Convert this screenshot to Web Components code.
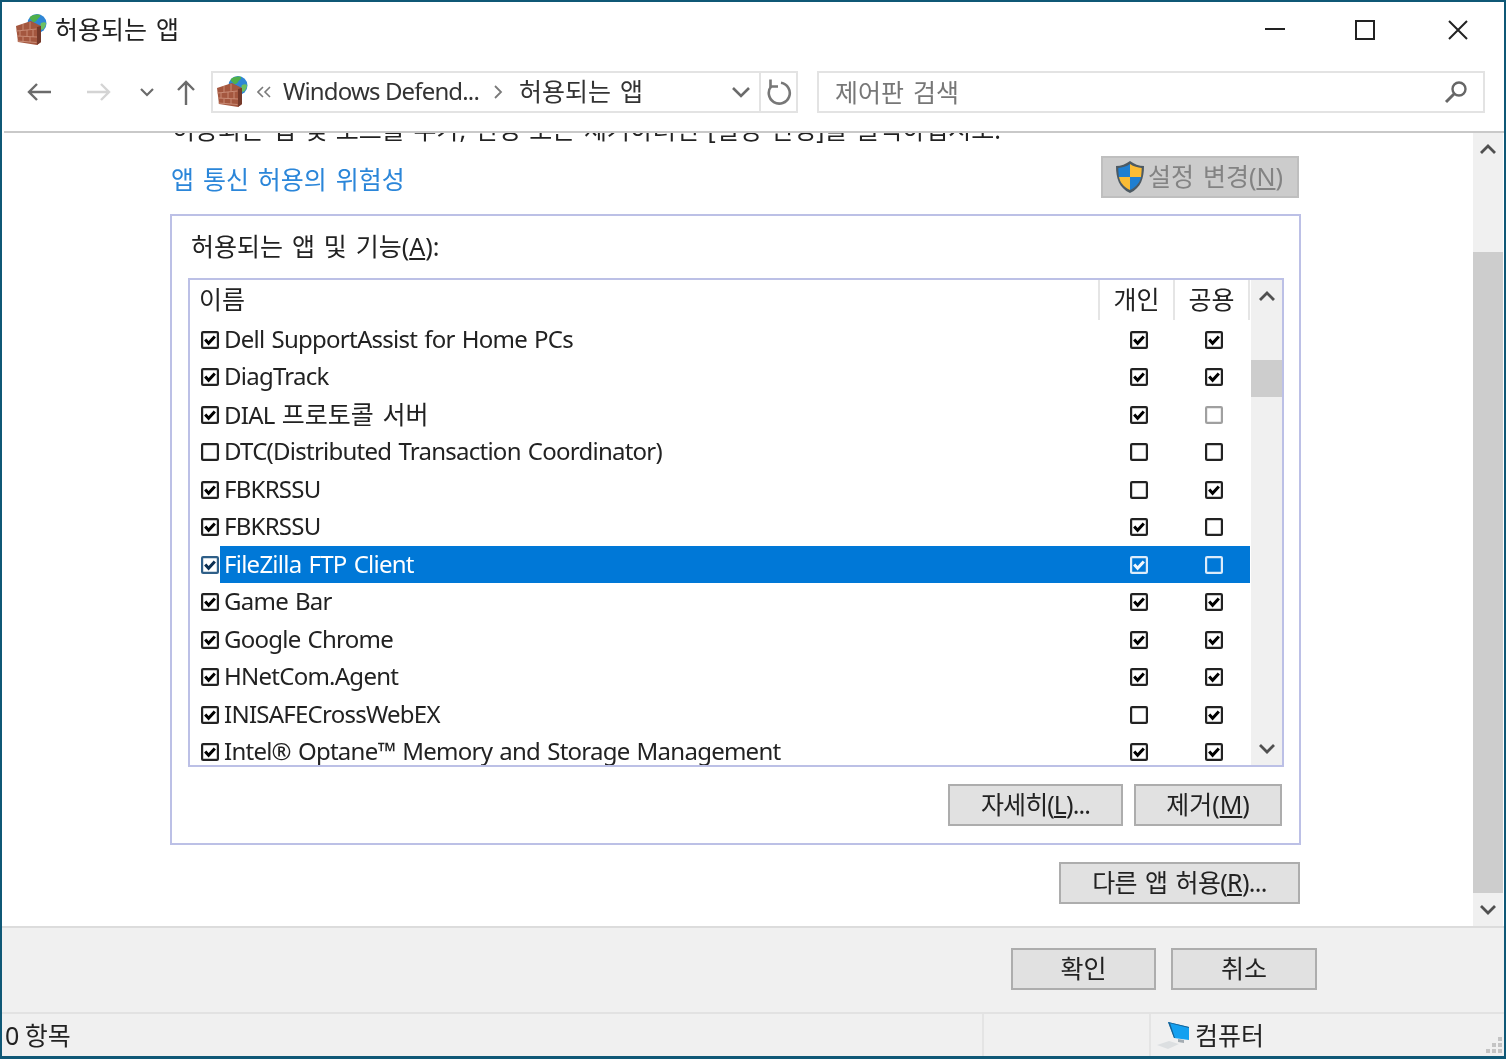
<!DOCTYPE html>
<html lang="ko">
<head>
<meta charset="utf-8">
<title>허용되는 앱</title>
<style>
    html, body { margin: 0; height: 100%; overflow: hidden; background: #fff; }
    body { font-family: "Noto Sans", "Noto Sans CJK KR", sans-serif; font-size: 25px; word-spacing: 2.4px; color: #222; }
</style>
</head>
<body>
<firewall-window></firewall-window>

<script>
const FIREWALL_SVG = `
    <svg width="32" height="32" viewBox="0 0 32 32" style="display:block">
        <circle cx="22" cy="9.500" r="9.500" fill="#2f86d6"/>
        <path d="M15 3c3-2.500 8-3 10-2 1 2-2 3-3 5s-4 3-5 1-3-2-2-4z" fill="#4fb04a"/>
        <path d="M26 9c2-1 4-1 5 0 0 3-2 6-4 7-2-1-2-5-1-7z" fill="#6cc060"/>
        <path d="M1 12l15-5 10 5v16l-4 3-19-3z" fill="#a4573f"/>
        <path d="M22 13l4-1v16l-4 3z" fill="#75392a"/>
        <path d="M1.500 17l20-2M2 22l20 1M2.500 27l19 1.500M8 10v6M15 8v7M5 17v5M12 16v7M18 16v7M8 23v4M15 23v5" stroke="#c98b75" stroke-width="1" fill="none"/>
    </svg>`;

class WinCheck extends HTMLElement {
    constructor() {
        super();
        this.attachShadow({ mode: 'open' });
    }
    connectedCallback() {
        const on = this.hasAttribute('on');
        const tone = this.getAttribute('tone') || 'normal';
        const colors = {
            normal: ['#222', '#000', '#fff'],
            off: ['#a0a0a0', '#a0a0a0', '#fff'],
            focus: ['#2f5f88', '#0c2f52', '#fff'],
            invert: ['#dcecfa', '#f2f8fd', 'transparent']
        }[tone];
        this.shadowRoot.innerHTML = `
            <style>
                :host { display: inline-block; width: 18px; height: 18px; line-height: 0; }
            </style>
            <svg width="18" height="18" viewBox="0 0 18 18">
                <rect x="1.100" y="1.100" width="15.800" height="15.800" rx="1" fill="${colors[2]}" stroke="${colors[0]}" stroke-width="2.200"/>
                ${on ? `<path d="M4.200 8.400l3.400 3.800 6.200-6.800" fill="none" stroke="${colors[1]}" stroke-width="3"/>` : ''}
            </svg>`;
    }
}
customElements.define('win-check', WinCheck);

class WinButton extends HTMLElement {
    constructor() {
        super();
        this.attachShadow({ mode: 'open' });
        this.shadowRoot.innerHTML = `
            <style>
                :host {
                    display: inline-flex;
                    align-items: center;
                    justify-content: center;
                    box-sizing: border-box;
                    height: 42px;
                    padding-bottom: 4px;
                    background: #e1e1e1;
                    border: 2px solid #adadad;
                    color: #222;
                    font-size: 25px;
                    white-space: nowrap;
                }
                :host([disabled]) {
                    background: #cccccc;
                    border-color: #bfbfbf;
                    color: #838383;
                }
            </style>
            <slot></slot>`;
    }
}
customElements.define('win-button', WinButton);

class WinScrollbar extends HTMLElement {
    constructor() {
        super();
        this.attachShadow({ mode: 'open' });
    }
    connectedCallback() {
        const offset = this.getAttribute('offset');
        const size = this.getAttribute('size');
        this.shadowRoot.innerHTML = `
            <style>
                :host {
                    display: flex;
                    flex-direction: column;
                    background: #f0f0f0;
                    flex: none;
                    height: 100%;
                    box-sizing: border-box;
                }
                .arrow {
                    height: 32px;
                    flex: none;
                    display: flex;
                    align-items: center;
                    justify-content: center;
                }
                .thumb {
                    background: #cdcdcd;
                    margin-top: ${offset}px;
                    height: ${size}px;
                    flex: none;
                }
                .down { margin-top: auto; }
            </style>
            <div class="arrow"><svg width="18" height="12" viewBox="0 0 18 12"><path d="M2 10l7-7 7 7" fill="none" stroke="#505050" stroke-width="2.800"/></svg></div>
            <div class="thumb"></div>
            <div class="arrow down"><svg width="18" height="12" viewBox="0 0 18 12"><path d="M2 2l7 7 7-7" fill="none" stroke="#505050" stroke-width="2.800"/></svg></div>`;
    }
}
customElements.define('win-scrollbar', WinScrollbar);

class WinTitlebar extends HTMLElement {
    constructor() {
        super();
        this.attachShadow({ mode: 'open' });
        this.shadowRoot.innerHTML = `
            <style>
                :host {
                    display: flex;
                    align-items: center;
                    height: 56px;
                    flex: none;
                    padding-left: 13px;
                    background: #fff;
                }
                .title { margin: -4px 0 0 8px; font-size: 25px; color: #222; }
                .controls { margin-left: auto; display: flex; }
                .controls div {
                    width: 91.500px;
                    height: 56px;
                    display: flex;
                    align-items: center;
                    justify-content: center;
                }
                svg { display: block; }
            </style>
            ${FIREWALL_SVG}
            <span class="title">허용되는 앱</span>
            <div class="controls">
                <div><svg width="20" height="20" viewBox="0 0 20 20"><path d="M0 9h20" stroke="#222" stroke-width="2"/></svg></div>
                <div><svg width="20" height="20" viewBox="0 0 20 20" style="margin-right:3px"><rect x="1" y="1" width="18" height="18" fill="none" stroke="#222" stroke-width="2"/></svg></div>
                <div><svg width="20" height="20" viewBox="0 0 20 20"><path d="M1 1l18 18M19 1L1 19" stroke="#222" stroke-width="2"/></svg></div>
            </div>`;
    }
}
customElements.define('win-titlebar', WinTitlebar);

class WinNavbar extends HTMLElement {
    constructor() {
        super();
        this.attachShadow({ mode: 'open' });
        this.shadowRoot.innerHTML = `
            <style>
                :host {
                    display: flex;
                    align-items: flex-start;
                    flex: none;
                    height: 75px;
                    box-sizing: border-box;
                    padding-top: 13px;
                    margin-left: 2px;
                    border-bottom: 2px solid #c9c9c9;
                    background: #fff;
                }
                svg { display: block; flex: none; }
                .arrows { display: flex; align-items: center; height: 42px; padding-left: 23px; width: 207px; box-sizing: border-box; }
                .field {
                    display: flex;
                    align-items: center;
                    box-sizing: border-box;
                    height: 42px;
                    border: 2px solid #e3e3e3;
                    background: #fff;
                }
                .address { width: 587px; }
                .search { width: 668px; margin-left: 19px; padding: 0 15px 0 16px; justify-content: space-between; color: #777; }
                .search span { margin-top: -3px; }
                .crumb { font-size: 25px; color: #333; white-space: nowrap; margin-top: -4px; }
                .latin { font-size: 24px; letter-spacing: -0.850px; word-spacing: 0; }
                .refresh { border-left: 2px solid #e3e3e3; height: 100%; width: 35px; display: flex; align-items: center; justify-content: center; flex: none; }
            </style>
            <div class="arrows">
                <svg width="24" height="20" viewBox="0 0 24 20"><path d="M24 10H2M10 2l-8 8 8 8" fill="none" stroke="#6b6b6b" stroke-width="2.400"/></svg>
                <svg width="24" height="20" viewBox="0 0 24 20" style="margin-left:36px"><path d="M0 10h22M14 2l8 8-8 8" fill="none" stroke="#d4d4d4" stroke-width="2.400"/></svg>
                <svg width="14" height="9" viewBox="0 0 14 9" style="margin-left:29px"><path d="M1 1l6 6 6-6" fill="none" stroke="#6b6b6b" stroke-width="2.200"/></svg>
                <svg width="20" height="26" viewBox="0 0 20 26" style="margin-left:22px"><path d="M10 26V3M2 11l8-8 8 8" fill="none" stroke="#6b6b6b" stroke-width="2.400"/></svg>
            </div>
            <div class="field address">
                <span style="margin-left:3px">${FIREWALL_SVG}</span>
                <svg width="14" height="12" viewBox="0 0 14 12" style="margin-left:9px"><path d="M6 1L1 6l5 5M13 1L8 6l5 5" fill="none" stroke="#7a7a7a" stroke-width="1.600"/></svg>
                <span class="crumb latin" style="margin-left:12px">Windows Defend...</span>
                <svg width="10" height="16" viewBox="0 0 10 16" style="margin-left:14px"><path d="M2 2l6 6-6 6" fill="none" stroke="#7a7a7a" stroke-width="1.800"/></svg>
                <span class="crumb" style="margin-left:16px">허용되는 앱</span>
                <svg width="18" height="11" viewBox="0 0 18 11" style="margin-left:auto;margin-right:9px"><path d="M1 1l8 8 8-8" fill="none" stroke="#6b6b6b" stroke-width="2.600"/></svg>
                <div class="refresh">
                    <svg width="26" height="28" viewBox="0 0 26 28" style="margin-left:1px"><path d="M5.500 8A10.500 10.500 0 1 0 15 4.700" fill="none" stroke="#777" stroke-width="2.600"/><path d="M4.500 1.500V8.500H12" fill="none" stroke="#777" stroke-width="2.600"/></svg>
                </div>
            </div>
            <div class="field search">
                <span>제어판 검색</span>
                <svg width="24" height="24" viewBox="0 0 24 24"><circle cx="15" cy="9" r="6.500" fill="none" stroke="#666" stroke-width="2.400"/><path d="M10 14l-8 8" stroke="#666" stroke-width="3"/></svg>
            </div>`;
    }
}
customElements.define('win-navbar', WinNavbar);

class AppRow extends HTMLElement {
    constructor() {
        super();
        this.attachShadow({ mode: 'open' });
    }
    connectedCallback() {
        const selected = this.hasAttribute('selected');
        const tone = selected ? 'invert' : 'normal';
        const box = (val) => {
            if (val === '2') return `<win-check tone="off"></win-check>`;
            return `<win-check tone="${tone}" ${val === '1' ? 'on' : ''}></win-check>`;
        };
        const flags = this.getAttribute('flags');
        this.shadowRoot.innerHTML = `
            <style>
                :host { display: flex; align-items: stretch; height: 37.500px; flex: none; font-size: 24px; letter-spacing: -0.750px; word-spacing: 1.600px; }
                .lead { width: 30px; flex: none; padding-left: 11px; box-sizing: border-box; display: flex; align-items: center; }
                .body {
                    flex: 1;
                    display: grid;
                    grid-template-columns: 1fr 75px 75px;
                    margin-right: 1px;
                    align-items: center;
                    color: #222;
                }
                :host([selected]) .body { background: #0078d7; color: #fff; }
                .name { padding-left: 4px; white-space: nowrap; margin-top: -3px; }
                .cell { padding-left: 3px; display: flex; justify-content: center; }
            </style>
            <div class="lead">
                <win-check tone="${selected ? 'focus' : 'normal'}" ${flags[0] === '1' ? 'on' : ''}></win-check>
            </div>
            <div class="body">
                <span class="name"><slot></slot></span>
                <span class="cell">${box(flags[1])}</span>
                <span class="cell">${box(flags[2])}</span>
            </div>`;
    }
}
customElements.define('app-row', AppRow);

class AppList extends HTMLElement {
    constructor() {
        super();
        this.attachShadow({ mode: 'open' });
        this.shadowRoot.innerHTML = `
            <style>
                :host {
                    display: flex;
                    box-sizing: border-box;
                    height: 489px;
                    border: 2px solid #bcc0e6;
                    background: #fff;
                    overflow: hidden;
                }
                .rows { flex: 1; display: flex; flex-direction: column; min-width: 0; overflow: hidden; }
                .head {
                    display: grid;
                    grid-template-columns: 910px 75px 75px;
                    height: 40.750px;
                    flex: none;
                    font-size: 25px;
                    color: #222;
                }
                .head div {
                    display: flex;
                    align-items: center;
                    height: 40px;
                    box-sizing: border-box;
                    border-right: 2px solid #e5e5e5;
                    justify-content: center;
                    padding-bottom: 4px;
                }
                .head div:first-child { justify-content: flex-start; padding-left: 9px; }
                win-scrollbar { width: 31px; }
            </style>
            <div class="rows">
                <div class="head"><div>이름</div><div>개인</div><div>공용</div></div>
                <slot></slot>
            </div>
            <win-scrollbar offset="48" size="37"></win-scrollbar>`;
    }
}
customElements.define('app-list', AppList);

class AppGroup extends HTMLElement {
    constructor() {
        super();
        this.attachShadow({ mode: 'open' });
        this.shadowRoot.innerHTML = `
            <style>
                :host {
                    display: block;
                    box-sizing: border-box;
                    width: 1131px;
                    height: 631px;
                    border: 2px solid #bcc0e6;
                    padding: 0 15px 0 16px;
                }
                .label { height: 62px; display: flex; align-items: center; padding: 0 0 4px 3px; box-sizing: border-box; font-size: 25px; color: #222; }
                .actions { display: flex; justify-content: flex-end; gap: 11px; margin: 17px 2px 0 0; }
            </style>
            <div class="label"><span>허용되는 앱 및 기능(<u>A</u>):</span></div>
            <slot name="list"></slot>
            <div class="actions"><slot name="actions"></slot></div>`;
    }
}
customElements.define('app-group', AppGroup);

class WinFooter extends HTMLElement {
    constructor() {
        super();
        this.attachShadow({ mode: 'open' });
        this.shadowRoot.innerHTML = `
            <style>
                :host {
                    display: flex;
                    justify-content: flex-end;
                    gap: 15px;
                    flex: none;
                    box-sizing: border-box;
                    height: 86px;
                    padding: 20px 187px 0 0;
                    background: #f0f0f0;
                    border-top: 2px solid #dcdcdc;
                }
            </style>
            <slot></slot>`;
    }
}
customElements.define('win-footer', WinFooter);

class WinStatus extends HTMLElement {
    constructor() {
        super();
        this.attachShadow({ mode: 'open' });
        this.shadowRoot.innerHTML = `
            <style>
                :host {
                    display: flex;
                    align-items: center;
                    flex: none;
                    box-sizing: border-box;
                    height: 44px;
                    background: #f0f0f0;
                    border-top: 2px solid #e2e2e2;
                    font-size: 25px;
                    color: #222;
                }
                .left { width: 982px; padding: 0 0 3px 3px; box-sizing: border-box; height: 100%; display: flex; align-items: center; border-right: 2px solid #e4e4e4; word-spacing: -1px; }
                .mid { width: 167px; box-sizing: border-box; height: 100%; border-right: 2px solid #e4e4e4; }
                .zone { display: flex; align-items: center; margin-left: 6px; gap: 4px; }
                .zone span { margin-top: -3px; }
                .grip { margin-left: auto; align-self: flex-end; margin-right: 1px; margin-bottom: 1px; display: block; }
            </style>
            <div class="left">0 항목</div>
            <div class="mid"></div>
            <div class="zone">
                <svg width="34" height="28" viewBox="0 0 34 28">
                    <path d="M11 1l21 5v13l-15-2z" fill="#14a0f0"/>
                    <path d="M11 1l2 1 5 15-1 0z" fill="#1b5f8f"/>
                    <path d="M11 1l21 5v1L12 2z" fill="#1b5f8f"/>
                    <path d="M21 18l6 1v3l-6-1z" fill="#a4acb2"/>
                    <path d="M0 24l12-4 10 3-11 5z" fill="#dcdfe1"/>
                </svg>
                <span>컴퓨터</span>
            </div>
            <svg class="grip" width="18" height="18" viewBox="0 0 18 18" fill="#c4c4c4">
                <rect x="13" y="0" width="4" height="4"/>
                <rect x="7" y="6" width="4" height="4"/><rect x="13" y="6" width="4" height="4"/>
                <rect x="1" y="12" width="4" height="4"/><rect x="7" y="12" width="4" height="4"/><rect x="13" y="12" width="4" height="4"/>
            </svg>`;
    }
}
customElements.define('win-status', WinStatus);

class FirewallWindow extends HTMLElement {
    constructor() {
        super();
        this.attachShadow({ mode: 'open' });
        const hangul = 'font-size:25px;letter-spacing:0;word-spacing:2.400px';
        const apps = [
            ['Dell SupportAssist for Home PCs', '111'],
            ['DiagTrack', '111'],
            [`DIAL <span style="${hangul}">프로토콜 서버</span>`, '112'],
            ['DTC(Distributed Transaction Coordinator)', '000'],
            ['FBKRSSU', '101'],
            ['FBKRSSU', '110'],
            ['FileZilla FTP Client', '110', true],
            ['Game Bar', '111'],
            ['Google Chrome', '111'],
            ['HNetCom.Agent', '111'],
            ['INISAFECrossWebEX', '101'],
            ['Intel® Optane™ Memory and Storage Management', '111']
        ];
        const rows = apps.map(app => `<app-row flags="${app[1]}" ${app[2] ? 'selected' : ''}>${app[0]}</app-row>`).join('');
        this.shadowRoot.innerHTML = `
            <style>
                :host {
                    display: flex;
                    flex-direction: column;
                    box-sizing: border-box;
                    width: 1506px;
                    height: 1059px;
                    border: 2px solid #0f5876;
                    border-bottom-width: 3px;
                    background: #fff;
                    overflow: hidden;
                    filter: blur(0.400px);
                }
                .content { flex: 1; display: flex; min-height: 0; }
                .main { flex: 1; min-width: 0; padding-left: 168px; overflow: hidden; }
                .clipped {
                    margin: -21px 0 10px 2px;
                    height: 34px;
                    line-height: 34px;
                    white-space: nowrap;
                    color: #222;
                    font-size: 25px;
                    word-spacing: 2.100px;
                }
                .top {
                    display: flex;
                    justify-content: space-between;
                    width: 1129px;
                    height: 42px;
                    margin-bottom: 16px;
                }
                .link { color: #2b86d9; font-size: 25px; padding-top: 1px; display: flex; align-items: center; margin-left: 1px; }
                .more { display: flex; justify-content: flex-end; width: 1130px; margin-top: 17px; }
                win-scrollbar { width: 30px; margin-right: 1px; }
                u { text-underline-offset: 2px; }
            </style>
            <win-titlebar></win-titlebar>
            <win-navbar></win-navbar>
            <div class="content">
                <div class="main">
                    <div class="clipped">허용되는 앱 및 포트를 추가, 변경 또는 제거하려면 [설정 변경]을 클릭하십시오.</div>
                    <div class="top">
                        <span class="link">앱 통신 허용의 위험성</span>
                        <win-button disabled style="width:198px">
                            <svg width="32" height="34" viewBox="0 0 32 34" style="margin:4px 2px 0 -3px;flex:none">
                                <path d="M16 1c4 3 9 5 14 5 0 12-3 22-14 27C5 28 2 18 2 6c5 0 10-2 14-5z" fill="#4d5a63"/>
                                <path d="M16 4v13H5C4.500 13 4.300 10 4.300 8 8 7.700 12.500 6.500 16 4z" fill="#1f7fd1"/>
                                <path d="M16 4c3.500 2.500 8 3.700 11.700 4 0 2-.2 5-.7 9H16z" fill="#fbbc34"/>
                                <path d="M5 17h11v13C9 26.500 6 22 5 17z" fill="#fbbc34"/>
                                <path d="M16 17h11c-1 5-4 9.500-11 13z" fill="#1f7fd1"/>
                            </svg><span>설정 변경(<u>N</u>)</span>
                        </win-button>
                    </div>
                    <app-group>
                        <app-list slot="list">${rows}</app-list>
                        <win-button slot="actions" style="width:175px;letter-spacing:-0.900px"><span>자세히(<u>L</u>)...</span></win-button>
                        <win-button slot="actions" style="width:148px"><span>제거(<u>M</u>)</span></win-button>
                    </app-group>
                    <div class="more">
                        <win-button style="width:241px;letter-spacing:-0.700px"><span>다른 앱 허용(<u>R</u>)...</span></win-button>
                    </div>
                </div>
                <win-scrollbar offset="87" size="641"></win-scrollbar>
            </div>
            <win-footer>
                <win-button style="width:145px">확인</win-button>
                <win-button style="width:146px">취소</win-button>
            </win-footer>
            <win-status></win-status>`;
    }
}
customElements.define('firewall-window', FirewallWindow);
</script>
</body>
</html>
